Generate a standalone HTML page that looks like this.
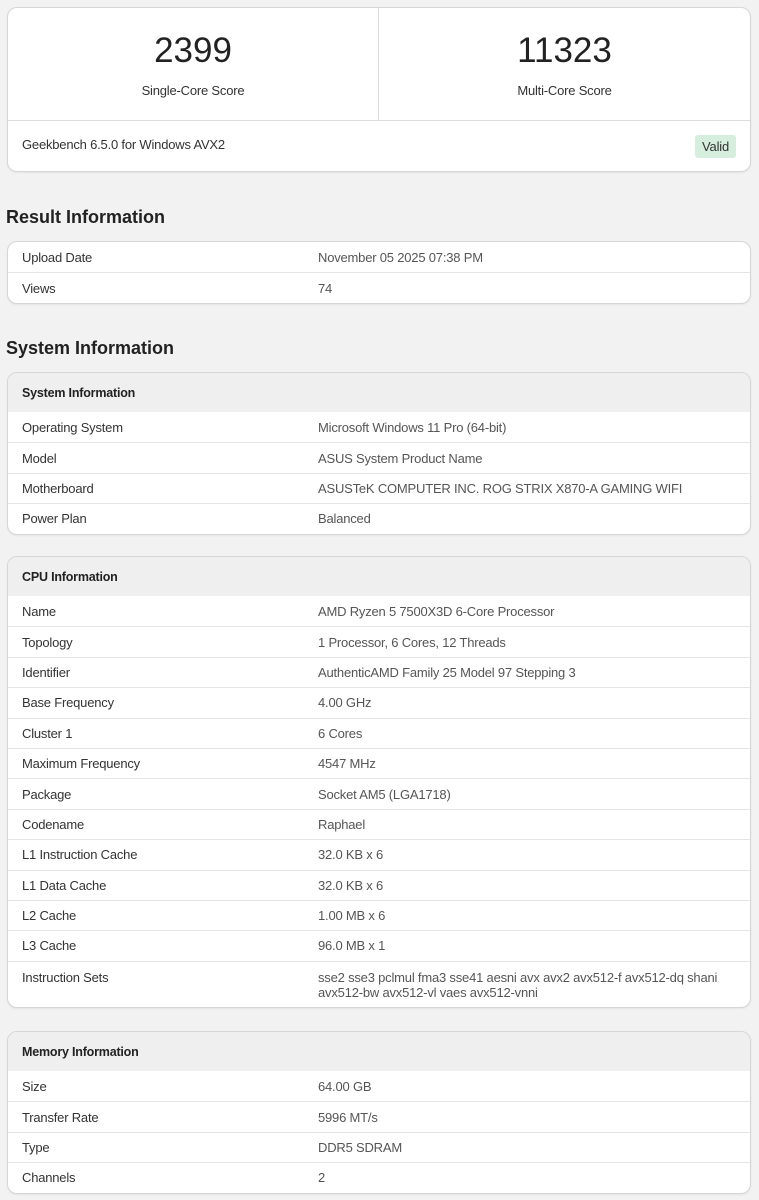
<!DOCTYPE html>
<html><head><meta charset="utf-8"><style>
*{box-sizing:border-box;margin:0;padding:0}
body{width:759px;height:1200px;background:#f2f2f2;font-family:"Liberation Sans",sans-serif;color:#333;position:relative;overflow:hidden;font-size:13px;letter-spacing:-0.2px}
.card{position:absolute;left:7px;width:744px;background:#fff;border:1px solid #d6d6d6;border-radius:10px;overflow:hidden;box-shadow:0 1px 2px rgba(0,0,0,.06)}
.row{display:flex;align-items:center;border-top:1px solid #e4e4e4;height:30.4px}
.row:first-child{border-top:none}
.l{width:310px;padding-left:14px;color:#333}
.v{flex:1;color:#555}
.hd{height:39px;background:#efefef;font-weight:bold;display:flex;align-items:center;padding-left:14px;font-size:12.5px;color:#222}
h2{position:absolute;left:6px;font-size:18px;font-weight:bold;color:#222;letter-spacing:0}
.score{position:absolute;top:0;width:371px;height:112px;text-align:center}
.score .n{font-size:35px;color:#222;padding-top:25px;line-height:36px;letter-spacing:0}
.score .t{font-size:13px;color:#333;margin-top:14px}
</style></head><body>
<div class="card" style="top:7px;height:165px">
 <div class="score" style="left:0;border-right:1px solid #dcdcdc"><div class="n">2399</div><div class="t">Single-Core Score</div></div>
 <div class="score" style="left:371px"><div class="n">11323</div><div class="t">Multi-Core Score</div></div>
 <div style="position:absolute;top:112px;left:0;right:0;height:48px;border-top:1px solid #dcdcdc;display:flex;align-items:center;justify-content:space-between;padding:0 14px">
  <span>Geekbench 6.5.0 for Windows AVX2</span>
  <span style="background:#d6eedd;color:#333;padding:4px 7px;border-radius:3px;margin-top:4px">Valid</span>
 </div>
</div>
<h2 style="top:207px">Result Information</h2>
<div class="card" style="top:241px">
 <div class="row"><div class="l">Upload Date</div><div class="v">November 05 2025 07:38 PM</div></div>
 <div class="row"><div class="l">Views</div><div class="v">74</div></div>
</div>
<h2 style="top:338px">System Information</h2>
<div class="card" style="top:372px">
 <div class="hd">System Information</div>
 <div class="row" style="border-top:none"><div class="l">Operating System</div><div class="v">Microsoft Windows 11 Pro (64-bit)</div></div>
 <div class="row"><div class="l">Model</div><div class="v">ASUS System Product Name</div></div>
 <div class="row"><div class="l">Motherboard</div><div class="v">ASUSTeK COMPUTER INC. ROG STRIX X870-A GAMING WIFI</div></div>
 <div class="row"><div class="l">Power Plan</div><div class="v">Balanced</div></div>
</div>
<div class="card" style="top:556px">
 <div class="hd">CPU Information</div>
 <div class="row" style="border-top:none"><div class="l">Name</div><div class="v">AMD Ryzen 5 7500X3D 6-Core Processor</div></div>
 <div class="row"><div class="l">Topology</div><div class="v">1 Processor, 6 Cores, 12 Threads</div></div>
 <div class="row"><div class="l">Identifier</div><div class="v">AuthenticAMD Family 25 Model 97 Stepping 3</div></div>
 <div class="row"><div class="l">Base Frequency</div><div class="v">4.00 GHz</div></div>
 <div class="row"><div class="l">Cluster 1</div><div class="v">6 Cores</div></div>
 <div class="row"><div class="l">Maximum Frequency</div><div class="v">4547 MHz</div></div>
 <div class="row"><div class="l">Package</div><div class="v">Socket AM5 (LGA1718)</div></div>
 <div class="row"><div class="l">Codename</div><div class="v">Raphael</div></div>
 <div class="row"><div class="l">L1 Instruction Cache</div><div class="v">32.0 KB x 6</div></div>
 <div class="row"><div class="l">L1 Data Cache</div><div class="v">32.0 KB x 6</div></div>
 <div class="row"><div class="l">L2 Cache</div><div class="v">1.00 MB x 6</div></div>
 <div class="row"><div class="l">L3 Cache</div><div class="v">96.0 MB x 1</div></div>
 <div class="row" style="height:46px;align-items:flex-start;padding-top:8px;line-height:15px"><div class="l">Instruction Sets</div><div class="v" style="padding-right:20px">sse2 sse3 pclmul fma3 sse41 aesni avx avx2 avx512-f avx512-dq shani avx512-bw avx512-vl vaes avx512-vnni</div></div>
</div>
<div class="card" style="top:1031px">
 <div class="hd">Memory Information</div>
 <div class="row" style="border-top:none"><div class="l">Size</div><div class="v">64.00 GB</div></div>
 <div class="row"><div class="l">Transfer Rate</div><div class="v">5996 MT/s</div></div>
 <div class="row"><div class="l">Type</div><div class="v">DDR5 SDRAM</div></div>
 <div class="row"><div class="l">Channels</div><div class="v">2</div></div>
</div>
</body></html>
